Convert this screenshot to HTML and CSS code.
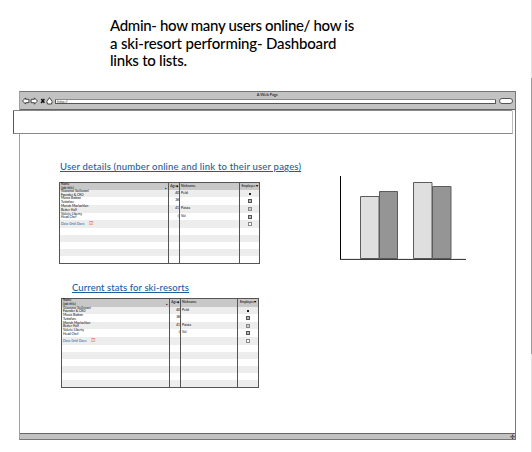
FILE: index.html
```html
<!DOCTYPE html>
<html lang="en">
<head>
<meta charset="utf-8">
<title>A Web Page</title>
<link rel="stylesheet" href="styles.css">
</head>
<body>
<div class="page">
  <p class="note"><span class="n1">Admin- how many users online/ how is</span><br><span class="n2">a ski-resort performing- Dashboard</span><br><span class="n3">links to lists.</span></p>
  <div class="window">
    <header class="chrome">
      <div class="title">A Web Page</div>
      <div class="toolbar">
        <svg class="nav" width="32" height="10" viewBox="0 0 32 10">
          <g fill="#fff" stroke="#333" stroke-width=".9" stroke-linejoin="round">
            <path d="M.5 5 3.6 1.9V3.3H6.9V6.7H3.6V8.1Z"/>
            <path d="M15.5 5 12.4 1.9V3.3H9.1V6.7H12.4V8.1Z"/>
            <path d="M24.8 5.4 27.5 1.6 30.2 5.4 29.5 8H25.5Z"/>
          </g>
          <path d="M19.3 3 22.4 6.8M22.4 2.9 19.1 7" stroke="#111" stroke-width="1.5"/>
        </svg>
        <div class="address">http://</div>
        <div class="search"></div>
      </div>
    </header>
    <div class="banner"></div>
    <main class="content">
      <div class="lists">
        <h2 class="h-users"><a>User details (number online and link to their user pages)</a></h2>
        <div class="grid users">
          <div class="row head"><div>Name<br>(job title)<i>▲</i></div><div>Age<i>◆</i></div><div>Nickname</div><div>Employee<b>▾</b></div></div>
          <div class="row"><div>Giacomo Guilizzoni<br>Founder &amp; CEO</div><div>40</div><div>Peldi</div><div><s class="dot"></s></div></div>
          <div class="row"><div>Marco Botton<br>Tuttofare</div><div>38</div><div></div><div><s class="on"></s></div></div>
          <div class="row"><div>Mariah Maclachlan<br>Better Half</div><div>41</div><div>Patata</div><div><s class="mid"></s></div></div>
          <div class="row"><div>Valerie Liberty<br>Head Chef</div><div>:)</div><div>Val</div><div><s class="on"></s></div></div>
          <div class="row"><div class="docs"><a>Data Grid Docs</a><em>☑</em></div><div></div><div></div><div><s></s></div></div>
          <div class="row"><div></div><div></div><div></div><div></div></div>
          <div class="row"><div></div><div></div><div></div><div></div></div>
          <div class="row"><div></div><div></div><div></div><div></div></div>
          <div class="row"><div></div><div></div><div></div><div></div></div>
          <div class="row"><div></div><div></div><div></div><div></div></div>
        </div>
        <h2 class="h-stats"><a>Current stats for ski-resorts</a></h2>
        <div class="grid stats">
          <div class="row head"><div>Name<br>(job title)<i>▲</i></div><div>Age<i>◆</i></div><div>Nickname</div><div>Employee<b>▾</b></div></div>
          <div class="row"><div>Giacomo Guilizzoni<br>Founder &amp; CEO</div><div>40</div><div>Peldi</div><div><s class="dot"></s></div></div>
          <div class="row"><div>Marco Botton<br>Tuttofare</div><div>38</div><div></div><div><s class="on"></s></div></div>
          <div class="row"><div>Mariah Maclachlan<br>Better Half</div><div>41</div><div>Patata</div><div><s class="mid"></s></div></div>
          <div class="row"><div>Valerie Liberty<br>Head Chef</div><div>:)</div><div>Val</div><div><s class="on"></s></div></div>
          <div class="row"><div class="docs"><a>Data Grid Docs</a><em>☑</em></div><div></div><div></div><div><s></s></div></div>
          <div class="row"><div></div><div></div><div></div><div></div></div>
          <div class="row"><div></div><div></div><div></div><div></div></div>
          <div class="row"><div></div><div></div><div></div><div></div></div>
          <div class="row"><div></div><div></div><div></div><div></div></div>
          <div class="row"><div></div><div></div><div></div><div></div></div>
          <div class="row"><div></div><div></div><div></div><div></div></div>
        </div>
      </div>
      <svg class="chart" width="128" height="86" viewBox="0 0 128 86">
        <g stroke="#5c5c5c">
          <path fill="#dfdfdf" d="M20.5 20.5H39V82.5H20.5ZM73.5 6.5H92V82.5H73.5Z"/>
          <path fill="#959595" d="M39.5 15.5H57.5V82.5H39.5ZM92.5 10.5H111V82.5H92.5Z"/>
        </g>
        <path d="M.5 0V83" stroke="#000"/>
        <path d="M0 83.4H126" stroke="#2c2828"/>
      </svg>
    </main>
    <footer class="status"><span>✢</span></footer>
  </div>
  <div class="scroll"><div class="thumb"></div></div>
</div>
</body>
</html>
```
FILE: styles.css
```css
* { box-sizing: border-box; }
body { margin: 0; background: #fff; font-family: Lato, "Liberation Sans", sans-serif; color: #000; overflow: hidden; }
.page { width: 532px; height: 452px; padding: 17px 0 0 19px; position: relative; }
.note { margin: 0 0 0 91px; width: 270px; height: 74px; font-size: 15px; font-weight: 500; line-height: 17.5px; white-space: nowrap; }
.n1 { letter-spacing: -.33px; }
.n2 { letter-spacing: -.17px; }
.n3 { letter-spacing: -.25px; }
.window { width: 497px; height: 349px; border: 1px solid #777; border-left-color: #a0a0a0; display: flex; flex-direction: column; }
.chrome { height: 18px; flex: none; background: #c2c2c2; border-bottom: 1px solid #666; }
.title { height: 5px; font-size: 4px; line-height: 6px; text-align: center; }
.toolbar { display: flex; height: 8px; align-items: center; padding: 0 2px; }
.nav { flex: none; }
.address { width: 441px; height: 5px; margin-left: 1px; background: #fff; border: 1px solid #555; border-top-color: #888; border-radius: 1px; font-size: 4px; line-height: 3px; padding-left: 1px; color: #444; }
.search { width: 14px; height: 6px; margin-left: 3px; background: #fff; border: 1px solid #555; border-radius: 3px; }
.banner { flex: none; width: 500px; height: 24px; margin-left: -7px; background: #fff; border: 1px solid #888; border-left-color: #555; border-right-color: #bbb; border-radius: 0 2px 0 0; }
.content { flex: 1; display: flex; min-height: 0; }
.lists { width: 320px; flex: none; }
h2 { margin: 0; font-size: 9.5px; font-weight: 500; line-height: 12px; white-space: nowrap; color: #1d5da0; }
a { color: #1d5da0; text-decoration: underline; text-decoration-thickness: 1px; }
.h-users { padding: 27px 0 0 40px; height: 48px; letter-spacing: .18px; }
.h-stats { padding: 18px 0 0 52px; height: 34px; letter-spacing: .08px; }
.grid { border: 1px solid #555; font-size: 3.3px; line-height: 3.7px; background: #fff; }
.users { width: 201px; height: 82px; margin-left: 39px; --c: 109px 11px 60px 1fr; }
.stats { width: 198px; height: 90px; margin-left: 41px; --c: 108px 11px 57px 1fr; }
.row { display: grid; grid-template-columns: var(--c); height: 7px; white-space: nowrap; }
.row:nth-child(-n+6) { height: 7.6px; }
.users .row.head { height: 6.9px; }
.row:nth-child(even) { background: #ededed; }
.grid .head { background: #c8c8c8; }
.row > div { border-right: 1px solid #555; padding-left: 1px; min-width: 0; }
.row > div:last-child { border: 0; text-align: center; padding: 0; }
.row > div:nth-child(2) { text-align: right; line-height: 7px; }
.row > div:nth-child(3), .head > div:last-child { line-height: 7px; }
i { float: right; font-style: normal; font-size: 2.5px; padding-right: 1px; }
b { font-size: 3.5px; }
s { display: block; width: 4px; height: 4px; margin: 2px auto 0; border: 1px solid #888; background: #fff; text-decoration: none; }
.on { border-color: #555; background: #bbb; }
.mid { background: #ccc; }
.dot { width: 2px; height: 2px; margin-top: 3px; border-color: #222; }
.row > .docs { line-height: 7px; }
.docs a { text-decoration: none; font-size: 3.5px; }
em { color: #e33; font-style: normal; font-size: 4.5px; margin-left: 4px; }
.chart { flex: none; margin-top: 42px; }
.status { flex: none; height: 6px; background: #c2c2c2; border-top: 1px solid #666; display: flex; justify-content: flex-end; font-size: 6px; line-height: 5px; }
.scroll { position: absolute; right: 0; top: 0; width: 1px; height: 452px; background: #e2e2e2; padding-top: 78px; }
.thumb { height: 276px; background: #999; }
```
